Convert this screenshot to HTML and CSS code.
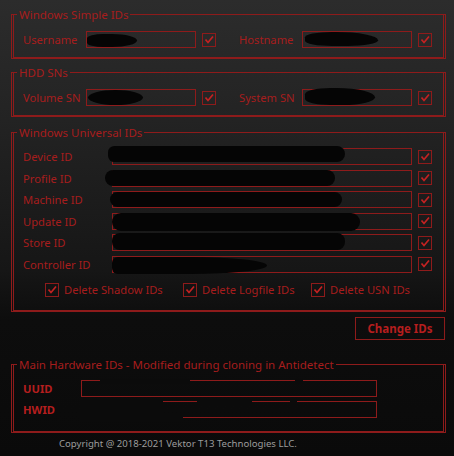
FILE: index.html
```html
<!DOCTYPE html>
<html lang="en">
<head>
  <meta charset="UTF-8">
  <meta name="viewport" content="width=device-width, initial-scale=1.0">
  <title>HWID Changer</title>
  <link rel="stylesheet" href="styles.css">
</head>
<body>
  <div class="app">

    <!-- Windows Simple IDs -->
    <div class="group group-simple">
      <fieldset class="frame">
        <legend>Windows Simple IDs</legend>
        <div class="frame-body pair-row">
          <div class="field">
            <span class="label">Username</span>
            <span class="box"><i class="mask m-user"></i></span>
            <span class="check"><svg viewBox="0 0 12 12"><polyline points="2.5,5.5 5,8.5 10,2.5"/></svg></span>
          </div>
          <div class="field">
            <span class="label">Hostname</span>
            <span class="box"><i class="mask m-host"></i></span>
            <span class="check"><svg viewBox="0 0 12 12"><polyline points="2.5,5.5 5,8.5 10,2.5"/></svg></span>
          </div>
        </div>
      </fieldset>
    </div>

    <!-- HDD SNs -->
    <div class="group group-hdd">
      <fieldset class="frame">
        <legend>HDD SNs</legend>
        <div class="frame-body pair-row">
          <div class="field">
            <span class="label">Volume SN</span>
            <span class="box"><i class="mask m-volume"></i></span>
            <span class="check"><svg viewBox="0 0 12 12"><polyline points="2.5,5.5 5,8.5 10,2.5"/></svg></span>
          </div>
          <div class="field">
            <span class="label">System SN</span>
            <span class="box"><i class="mask m-system"></i></span>
            <span class="check"><svg viewBox="0 0 12 12"><polyline points="2.5,5.5 5,8.5 10,2.5"/></svg></span>
          </div>
        </div>
      </fieldset>
    </div>

    <!-- Windows Universal IDs -->
    <div class="group group-universal">
      <fieldset class="frame">
        <legend>Windows Universal IDs</legend>
        <div class="frame-body universal-body">
          <div class="id-list">
            <div class="id-row">
              <span class="label">Device ID</span>
              <span class="box wide"><i class="mask m-device"></i></span>
              <span class="check"><svg viewBox="0 0 12 12"><polyline points="2.5,5.5 5,8.5 10,2.5"/></svg></span>
            </div>
            <div class="id-row">
              <span class="label">Profile ID</span>
              <span class="box wide"><i class="mask m-profile"></i></span>
              <span class="check"><svg viewBox="0 0 12 12"><polyline points="2.5,5.5 5,8.5 10,2.5"/></svg></span>
            </div>
            <div class="id-row">
              <span class="label">Machine ID</span>
              <span class="box wide"><i class="mask m-machine"></i></span>
              <span class="check"><svg viewBox="0 0 12 12"><polyline points="2.5,5.5 5,8.5 10,2.5"/></svg></span>
            </div>
            <div class="id-row">
              <span class="label">Update ID</span>
              <span class="box wide"><i class="mask m-update"></i></span>
              <span class="check"><svg viewBox="0 0 12 12"><polyline points="2.5,5.5 5,8.5 10,2.5"/></svg></span>
            </div>
            <div class="id-row">
              <span class="label">Store ID</span>
              <span class="box wide"><i class="mask m-store"></i></span>
              <span class="check"><svg viewBox="0 0 12 12"><polyline points="2.5,5.5 5,8.5 10,2.5"/></svg></span>
            </div>
            <div class="id-row">
              <span class="label">Controller ID</span>
              <span class="box wide"><i class="mask m-controller"></i></span>
              <span class="check"><svg viewBox="0 0 12 12"><polyline points="2.5,5.5 5,8.5 10,2.5"/></svg></span>
            </div>
          </div>

          <div class="options">
            <label class="option"><span class="check"><svg viewBox="0 0 12 12"><polyline points="2.5,5.5 5,8.5 10,2.5"/></svg></span>Delete Shadow IDs</label>
            <label class="option"><span class="check"><svg viewBox="0 0 12 12"><polyline points="2.5,5.5 5,8.5 10,2.5"/></svg></span>Delete Logfile IDs</label>
            <label class="option"><span class="check"><svg viewBox="0 0 12 12"><polyline points="2.5,5.5 5,8.5 10,2.5"/></svg></span>Delete USN IDs</label>
          </div>
        </div>
      </fieldset>
    </div>

    <div class="actions">
      <button class="change-btn">Change IDs</button>
    </div>

    <!-- Main Hardware IDs -->
    <div class="group group-main">
      <fieldset class="frame">
        <legend>Main Hardware IDs - Modified during cloning in Antidetect</legend>
        <div class="frame-body hw-list">
          <div class="hw-row">
            <span class="label strong">UUID</span>
            <span class="box hw"><i class="cut u1"></i><i class="cut u2"></i></span>
          </div>
          <div class="hw-row">
            <span class="label strong">HWID</span>
            <span class="box hw"><i class="cut h1"></i><i class="cut h2"></i><i class="cut h3"></i><i class="cut h4"></i></span>
          </div>
        </div>
      </fieldset>
    </div>

    <p class="copyright">Copyright @ 2018-2021 Vektor T13 Technologies LLC.</p>
  </div>
</body>
</html>
```

FILE: styles.css
```css
/* General */
html, body {
  margin: 0;
  padding: 0;
}

body {
  width: 454px;
  height: 456px;
  overflow: hidden;
  font-family: "Noto Sans", "Open Sans", sans-serif;
  font-size: 11.2px;
  color: #a61d1d;
  background: linear-gradient(180deg, #2c2c2c 0, #232323 120px, #161616 270px, #0d0d0d 320px, #0a0a0a 100%);
}

.app {
  padding: 7px 0 0 11px;
  display: flex;
  flex-direction: column;
}

/* Group boxes: a fieldset plus a second outer line */
.group {
  width: 435px;
  box-sizing: border-box;
  padding: 0 2px 1px;
  background:
    linear-gradient(#8e1b1b, #8e1b1b) left 7px / 1px calc(100% - 7px) no-repeat,
    linear-gradient(#8e1b1b, #8e1b1b) right 7px / 1px calc(100% - 7px) no-repeat,
    linear-gradient(#8e1b1b, #8e1b1b) left bottom / 100% 1px no-repeat,
    linear-gradient(#8e1b1b, #8e1b1b) left 7px / 3px 1px no-repeat,
    linear-gradient(#8e1b1b, #8e1b1b) right 7px / 3px 1px no-repeat;
}

.group-hdd { margin-top: 6px; }
.group-universal { margin-top: 8px; }
.group-main { margin-top: 17px; }

.frame {
  margin: 0;
  padding: 0;
  border: 1px solid #8e1b1b;
  min-width: 0;
}

.frame legend {
  margin-left: 3px;
  padding: 0 2px;
  line-height: 15px;
  font-size: 11.5px;
  color: #a61d1d;
}

.frame-body {
  padding: 9px 0 9px 9px;
}

/* Inputs */
.label {
  display: inline-block;
  line-height: 17px;
  white-space: nowrap;
}

.label.strong {
  font-weight: bold;
  color: #b51e1e;
}

.box {
  position: relative;
  display: block;
  box-sizing: border-box;
  width: 110px;
  height: 17px;
  border: 1px solid #8e1b1b;
}

.box.wide { width: 300px; }
.box.hw { width: 296px; }

.check {
  display: flex;
  box-sizing: border-box;
  width: 14px;
  height: 14px;
  border: 1px solid #8e1b1b;
  align-items: center;
  justify-content: center;
}

.check svg {
  width: 12px;
  height: 12px;
  fill: none;
  stroke: #c42222;
  stroke-width: 1.7;
}

/* Simple ID rows */
.pair-row {
  display: flex;
  gap: 23px;
}

.field {
  display: flex;
  align-items: center;
}

.field .label { width: 63px; }
.field .check { margin-left: 6px; }

/* Universal IDs */
.universal-body {
  padding-top: 8px;
  padding-bottom: 9px;
}

.id-list {
  display: flex;
  flex-direction: column;
  gap: 4.6px;
}

.id-row {
  display: flex;
  align-items: center;
}

.id-row .label { width: 89px; }
.id-row .check { margin-left: 6px; }

.options {
  display: grid;
  grid-template-columns: 138px 128px auto;
  margin: 10px 0 4px 22px;
}

.option {
  display: flex;
  align-items: center;
  gap: 5px;
  line-height: 14px;
  white-space: nowrap;
}

/* Redaction blobs */
.mask {
  position: absolute;
  background: #050505;
  border-radius: 50%;
}

.m-user { left: 0; top: 2px; width: 50px; height: 13px; border-radius: 40% 60% 60% 40%; }
.m-host { left: 2px; top: 0; width: 73px; height: 14px; border-radius: 45% 70% 50% 45%; }
.m-volume { left: 1px; top: 0; width: 55px; height: 15px; }
.m-system { left: 2px; top: -2px; width: 70px; height: 17px; border-radius: 40% 60% 50% 40%; }
.m-device { left: -5px; top: -3px; width: 237px; height: 16px; border-radius: 8px 10px 10px 8px; }
.m-profile { left: -8px; top: -1px; width: 230px; height: 16px; border-radius: 8px; }
.m-machine { left: -3px; top: 0; width: 232px; height: 15px; border-radius: 8px; }
.m-update { left: -1px; top: -1px; width: 248px; height: 18px; border-radius: 9px; }
.m-store { left: -1px; top: -2px; width: 233px; height: 17px; border-radius: 8px; }
.m-controller { left: -1px; top: 0; width: 155px; height: 17px; border-radius: 6px 50% 50% 6px; }

/* Button */
.actions {
  display: flex;
  justify-content: flex-end;
  width: 435px;
  margin-top: 5px;
}

.change-btn {
  width: 90px;
  height: 23px;
  margin-right: 1px;
  padding: 0;
  background: transparent;
  border: 1px solid #8e1b1b;
  color: #b51e1e;
  font-family: "Noto Sans", "Open Sans", sans-serif;
  font-size: 11.5px;
  font-weight: bold;
  cursor: pointer;
}

/* Main hardware IDs */
.hw-list {
  display: flex;
  flex-direction: column;
  gap: 4px;
  padding-top: 8px;
  padding-bottom: 13px;
}

.hw-row {
  display: flex;
  align-items: center;
}

.hw-row .label { width: 58px; }

.cut {
  position: absolute;
  background: #0b0b0b;
}

.u1 { left: 18px; top: -2px; width: 90px; height: 5px; }
.u2 { left: 213px; top: -2px; width: 8px; height: 5px; }
.h1 { left: -2px; top: -2px; width: 83px; height: 19px; }
.h2 { left: 115px; top: -2px; width: 55px; height: 5px; }
.h3 { left: 208px; top: -2px; width: 7px; height: 5px; }
.h4 { left: -2px; top: 13px; width: 103px; height: 6px; }

.copyright {
  margin: 5px 0 0 48px;
  font-size: 9.6px;
  line-height: 12px;
  color: #9c9c9c;
}
```
